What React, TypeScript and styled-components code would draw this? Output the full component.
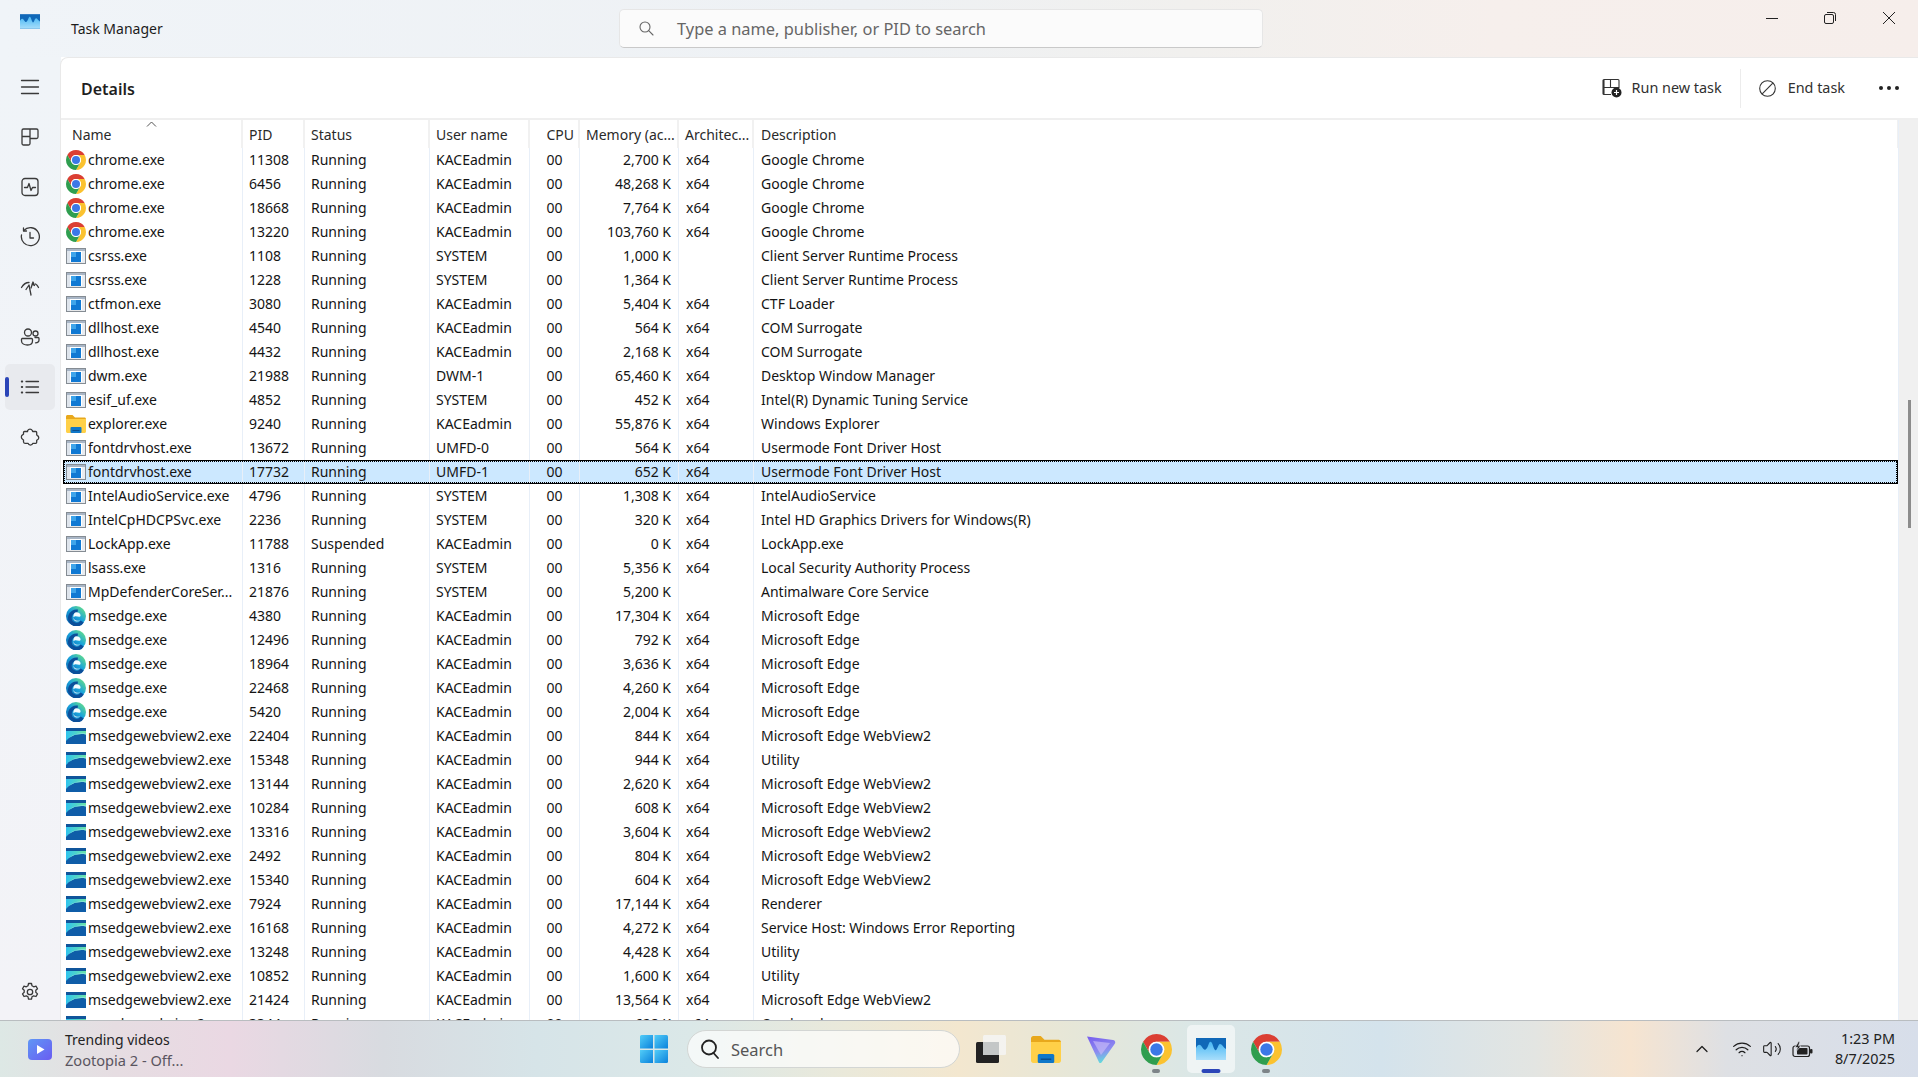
import styled, { createGlobalStyle } from "styled-components";
import { ChevronUp, Volume2, Wifi } from "lucide-react";

const GlobalStyle = createGlobalStyle`
  html, body {
    margin: 0;
    padding: 0;
    height: 100%;
    overflow: hidden;
    background: #fff;
  }
  * {
    box-sizing: border-box;
  }
  body {
    font-family: "Noto Sans", "Open Sans", "Liberation Sans", sans-serif;
    color: #1a1a1a;
  }
`;

const COLUMNS = "180px 62px 125px 100px 50px 99px 75px 1145px";

const Page = styled.div`
  width: 1918px;
  height: 1077px;
  display: flex;
  flex-direction: column;
  overflow: hidden;
`;

const TitleBar = styled.header`
  height: 57px;
  flex: none;
  display: grid;
  grid-template-columns: 619px 644px 1fr;
  align-items: center;
  background: linear-gradient(90deg, #f0f4f8 0%, #eef1f4 45%, #f1f0ee 62%, #f6efec 78%, #f6eeeb 100%);
`;

const TitleGroup = styled.div`
  display: flex;
  align-items: flex-start;
  height: 100%;
  padding: 14px 0 0 20px;
`;

const AppTitle = styled.span`
  margin: 6px 0 0 31px;
  font-size: 14px;
  line-height: 18px;
  color: #1c1c1c;
`;

const SearchBox = styled.div`
  height: 39px;
  margin-top: -1px;
  display: flex;
  align-items: center;
  padding-left: 19px;
  background: #fbfbfb;
  border: 1px solid #e6e6e6;
  border-bottom-color: #c9c9c9;
  border-radius: 5px;
  font-size: 16.4px;
  color: #666;
  span {
    margin-left: 23px;
  }
`;

const WindowControls = styled.div`
  display: flex;
  justify-content: flex-end;
  align-self: start;
`;

const ControlButton = styled.div`
  width: 58.5px;
  height: 36px;
  display: flex;
  align-items: center;
  justify-content: center;
`;

const Body = styled.div`
  flex: 1;
  min-height: 0;
  display: flex;
`;

const Rail = styled.nav`
  width: 61px;
  flex: none;
  display: flex;
  flex-direction: column;
  padding: 7px 0 0 5px;
  background: linear-gradient(180deg, #f0f4f8, #f3f3f7);
`;

const RailItem = styled.div<{ $active?: boolean }>`
  position: relative;
  width: 50px;
  height: 46px;
  margin-bottom: 4px;
  display: flex;
  align-items: center;
  justify-content: center;
  border-radius: 5px;
  background: ${(props) => (props.$active ? "#e8eaee" : "transparent")};
  color: #3a3a3a;
  &::before {
    content: "";
    display: ${(props) => (props.$active ? "block" : "none")};
    position: absolute;
    left: 0;
    top: 13px;
    width: 4px;
    height: 20px;
    border-radius: 2px;
    background: #2b45b8;
  }
`;

const RailSpacer = styled.div`
  flex: 1;
`;

const RailFooter = styled(RailItem)`
  margin-bottom: 5px;
`;

const Panel = styled.main`
  flex: 1;
  min-width: 0;
  display: flex;
  flex-direction: column;
  background: #fff;
  border-top-left-radius: 8px;
  border-top: 1px solid #e9e9e9;
  border-left: 1px solid #e9e9e9;
  margin-left: -1px;
  overflow: hidden;
`;

const PanelHeader = styled.div`
  height: 62px;
  flex: none;
  display: flex;
  align-items: center;
  padding: 0 19px 0 20px;
  border-bottom: 2px solid #efefef;
`;

const PanelTitle = styled.h1`
  flex: 1;
  margin: 2px 0 0;
  font-size: 16px;
  font-weight: 600;
  color: #1f1f1f;
`;

const ActionButton = styled.div<{ $gap: number }>`
  display: flex;
  align-items: center;
  gap: ${(props) => props.$gap}px;
  font-size: 14.4px;
  line-height: 18px;
  color: #303030;
`;

const ActionDivider = styled.div`
  width: 1px;
  height: 39px;
  margin: 0 18px;
  background: #ececec;
`;

const MoreDots = styled.div`
  display: flex;
  gap: 4px;
  margin-left: 34px;
  i {
    width: 4px;
    height: 4px;
    border-radius: 50%;
    background: #222;
  }
`;

const TableArea = styled.div`
  flex: 1;
  min-height: 0;
  display: flex;
  overflow: hidden;
`;

const Table = styled.div`
  flex: 1;
  min-width: 0;
  padding-left: 2px;
  border-right: 1px solid #e8eff8;
  overflow: hidden;
`;

const ScrollTrack = styled.div`
  width: 19px;
  flex: none;
  padding: 280px 7px 0 9px;
  background: #f0f0f0;
`;

const ScrollThumb = styled.div`
  height: 128px;
  background: #8c8c8c;
`;

const HeaderRow = styled.div`
  position: relative;
  display: grid;
  grid-template-columns: ${COLUMNS};
  height: 28px;
  font-size: 14px;
  line-height: 29px;
  color: #2a2a2a;
`;

const HeaderCell = styled.div<{ $right?: boolean; $inset?: number }>`
  padding: 0 ${(props) => (props.$right ? 4 : 0)}px 0 ${(props) => props.$inset ?? 6}px;
  text-align: ${(props) => (props.$right ? "right" : "left")};
  border-right: 2px solid #f1f1f1;
  white-space: nowrap;
  overflow: hidden;
`;

const SortCaret = styled.svg`
  position: absolute;
  left: 83px;
  top: 1px;
`;

const Row = styled.div<{ $selected?: boolean }>`
  position: relative;
  display: grid;
  grid-template-columns: ${COLUMNS};
  height: 24px;
  font-size: 14px;
  line-height: 24px;
  color: #141414;
  background: ${(props) => (props.$selected ? "#cce8ff" : "transparent")};
  &::after {
    content: "";
    display: ${(props) => (props.$selected ? "block" : "none")};
    position: absolute;
    inset: 0;
    border: 1px solid #000;
    outline: 1px dotted #000;
    outline-offset: -2px;
    pointer-events: none;
  }
`;

const Cell = styled.div<{ $align?: string; $inset?: number }>`
  padding: 0 ${(props) => (props.$align === "right" ? 7 : 0)}px 0 ${(props) => props.$inset ?? 6}px;
  text-align: ${(props) => props.$align ?? "left"};
  border-right: 1px solid #e8eff8;
  white-space: nowrap;
  overflow: hidden;
`;

const NameCell = styled(Cell)`
  display: flex;
  align-items: center;
  gap: 2px;
  padding-left: 3px;
`;

const Taskbar = styled.footer`
  height: 57px;
  flex: none;
  display: grid;
  grid-template-columns: 630px 644px 1fr;
  align-items: center;
  border-top: 1px solid #b9bdc0;
  background: linear-gradient(
    90deg,
    #dde8e5 0%,
    #e6dde2 6%,
    #ead8e3 12%,
    #d8dbe0 20%,
    #d6e4e8 28%,
    #dbe8e8 36%,
    #eae9da 44%,
    #f3e7cf 50%,
    #e6e7d8 56%,
    #dbe7e6 62%,
    #d4e3ec 72%,
    #e3e5e2 80%,
    #f6e4d0 85%,
    #dee0e4 90%,
    #d7deea 100%
  );
`;

const Widget = styled.div`
  display: flex;
  align-items: center;
  gap: 13px;
  padding-left: 28px;
`;

const WidgetText = styled.div`
  padding-top: 1px;
  font-size: 14px;
  line-height: 20px;
  color: #222;
  small {
    display: block;
    font-size: 14.6px;
    color: #5a5560;
  }
`;

const Center = styled.div`
  display: flex;
  align-items: center;
  gap: 7px;
`;

const Tile = styled.div<{ $active?: boolean }>`
  position: relative;
  width: 48px;
  height: 48px;
  flex: none;
  display: flex;
  align-items: center;
  justify-content: center;
  border-radius: 5px;
  background: ${(props) => (props.$active ? "rgba(255,255,255,0.55)" : "transparent")};
`;

const RunDot = styled.span<{ $active?: boolean }>`
  position: absolute;
  bottom: 0;
  left: 50%;
  transform: translateX(-50%);
  width: ${(props) => (props.$active ? 19 : 8)}px;
  height: 4px;
  border-radius: 2px;
  background: ${(props) => (props.$active ? "#2b45b8" : "#7d8488")};
`;

const TaskSearch = styled.div`
  width: 273px;
  height: 38px;
  flex: none;
  margin-left: 2px;
  display: flex;
  align-items: center;
  gap: 12px;
  padding-left: 13px;
  border: 1px solid #d3d6d4;
  border-radius: 19px;
  background: rgba(255, 255, 255, 0.68);
  font-size: 16.5px;
  color: #555;
`;

const Tray = styled.div`
  display: flex;
  align-items: center;
  justify-content: flex-end;
  padding-right: 23px;
  color: #1f1f1f;
`;

const TrayIcons = styled.div`
  display: flex;
  align-items: center;
  gap: 10px;
  margin-right: 22px;
`;

const TrayChevron = styled(ChevronUp)`
  margin-right: 20px;
`;

const Clock = styled.div`
  font-size: 14.4px;
  line-height: 20px;
  text-align: right;
  color: #222;
`;

function ChromeIcon({ size = 20 }: { size?: number }) {
  return (
    <svg width={size} height={size} viewBox="2 2 44 44" style={{ flex: "none" }}>
      <path fill="#db3f33" d="M4.95 13A22 22 0 0 1 43.05 13H24A11 11 0 0 0 14.47 29.5Z" />
      <path fill="#fbc22f" d="M43.05 13A22 22 0 0 1 24 46L33.53 29.5A11 11 0 0 0 24 13Z" />
      <path fill="#2f9e4f" d="M24 46A22 22 0 0 1 4.95 13L14.47 29.5A11 11 0 0 0 33.53 29.5Z" />
      <circle cx="24" cy="24" r="11" fill="#fff" />
      <circle cx="24" cy="24" r="8.8" fill="#3b78e7" />
    </svg>
  );
}

function ExeIcon() {
  return (
    <svg width="20" height="16" viewBox="0 0 20 16" style={{ flex: "none" }}>
      <rect x="0.6" y="0.6" width="18.8" height="14.8" fill="#fff" stroke="#858c93" strokeWidth="1.2" />
      <rect x="1" y="1" width="18" height="2" fill="#a9b6c6" />
      <rect x="1" y="3" width="3" height="12" fill="#dfe5ec" />
      <rect x="16" y="3" width="3" height="12" fill="#e8ecf1" />
      <rect x="5" y="4" width="10" height="10" fill="#1079d3" />
      <rect x="5" y="4" width="5" height="5" fill="#3fa5ea" />
    </svg>
  );
}

function FolderIcon({ width = 20, height = 18 }: { width?: number; height?: number }) {
  return (
    <svg width={width} height={height} viewBox="0 0 20 18" style={{ flex: "none" }}>
      <path fill="#e8a81c" d="M0 1.5C0 .7.7 0 1.5 0h5L9 2.5h9.5c.8 0 1.5.7 1.5 1.5v2H0z" />
      <path fill="#ffd048" d="M0 4h20v12.5c0 .8-.7 1.5-1.5 1.5h-17C.7 18 0 17.3 0 16.5z" />
      <rect x="4.5" y="12" width="11" height="6" rx="1" fill="#0f77c9" />
      <rect x="6.5" y="15" width="7" height="1" fill="#0b4f8f" />
    </svg>
  );
}

function EdgeIcon() {
  return (
    <svg width="20" height="20" viewBox="0 0 24 24" style={{ flex: "none" }}>
      <defs>
        <linearGradient id="edgeBase" x1="0.9" y1="0.1" x2="0.2" y2="0.9">
          <stop offset="0" stopColor="#62dc8c" />
          <stop offset="0.5" stopColor="#1ba4dc" />
          <stop offset="1" stopColor="#0c6cb6" />
        </linearGradient>
      </defs>
      <circle cx="12" cy="12" r="12" fill="url(#edgeBase)" />
      <path fill="none" stroke="#0b4f9a" strokeWidth="4.5" d="M19.5 18.5A8 8 0 1 1 14 6.500" />
      <path fill="#f4fbff" d="M12.500 7.500c3 0 5 1.800 5 3.800 0 1-.8 1.500-1.800 1.500-1.500 0-3-.8-4.700-.6-1 .1-1.700.7-2.100 1.500C8.500 10 10 7.500 12.500 7.500z" />
      <path fill="#cfeaf8" d="M9 14c.5 2 2.500 3.600 5.500 3.700 1 0 2-.2 2.800-.6-1.500 1.200-3.300 1.600-5 1.400C9.800 18 8.500 16 9 14z" />
    </svg>
  );
}

function WebviewIcon() {
  return (
    <svg width="20" height="16" viewBox="0 0 20 16" style={{ flex: "none" }}>
      <defs>
        <linearGradient id="webviewSky" x1="0" y1="0.5" x2="1" y2="0.5">
          <stop offset="0" stopColor="#2fc3ee" />
          <stop offset="1" stopColor="#6be3a7" />
        </linearGradient>
      </defs>
      <rect width="20" height="3" fill="#10559b" />
      <rect y="3" width="20" height="13" fill="url(#webviewSky)" />
      <path fill="#0f5da8" d="M0 16V13C4 8 11 5 20 6.500V16z" />
      <path fill="#8fe6e0" d="M0 13C4 7.500 11 4.500 20 5.500V6.500C11 5 4 8 0 13z" />
    </svg>
  );
}

function TaskManagerLogo({ width = 20, height = 15 }: { width?: number; height?: number }) {
  return (
    <svg width={width} height={height} viewBox="0 0 30 22" style={{ flex: "none" }}>
      <defs>
        <linearGradient id="tmFill" x1="0.5" y1="0" x2="0.5" y2="1">
          <stop offset="0" stopColor="#49b8f4" />
          <stop offset="1" stopColor="#a8defb" />
        </linearGradient>
      </defs>
      <rect width="30" height="22" fill="#1068b8" />
      <path
        fill="url(#tmFill)"
        d="M0 10C2 6 4 6 6 9s3 4 5 1 2-7 4-6 2 6 4 8 3-6 5-6 3 3 6 5v11H0z"
      />
    </svg>
  );
}

function ProcessStatusIcon({ kind }: { kind: string }) {
  if (kind === "chrome") return <ChromeIcon />;
  if (kind === "explorer") return <FolderIcon />;
  if (kind === "edge") return <EdgeIcon />;
  if (kind === "webview") return <WebviewIcon />;
  return <ExeIcon />;
}

const railStroke = { fill: "none", stroke: "#3a3a3a", strokeWidth: 1.3, strokeLinecap: "round", strokeLinejoin: "round" } as const;

function RailIcon({ children }: { children: React.ReactNode }) {
  return (
    <svg width="20" height="20" viewBox="0 0 20 20" {...railStroke}>
      {children}
    </svg>
  );
}

function WinLogo() {
  return (
    <svg width="30" height="30" viewBox="0 0 30 30">
      <defs>
        <linearGradient id="winPane" x1="0" y1="0" x2="1" y2="1">
          <stop offset="0" stopColor="#52cdf8" />
          <stop offset="1" stopColor="#0b82dc" />
        </linearGradient>
      </defs>
      <path fill="url(#winPane)" d="M1 2.500A1.500 1.500 0 0 1 2.500 1H14v13.500H1z" />
      <path fill="url(#winPane)" d="M15.500 1H27.500A1.500 1.500 0 0 1 29 2.500V14.500H15.500z" />
      <path fill="url(#winPane)" d="M1 16H14V29H2.500A1.500 1.500 0 0 1 1 27.500z" />
      <path fill="url(#winPane)" d="M15.500 16H29V27.500A1.500 1.500 0 0 1 27.500 29H15.500z" />
    </svg>
  );
}

function TaskViewIcon() {
  return (
    <svg width="32" height="30" viewBox="0 0 32 30">
      <rect x="1" y="8" width="23" height="21" rx="1.500" fill="#222" />
      <rect x="8" y="1" width="23" height="20" rx="1.500" fill="#f5f5f5" fillOpacity="0.85" />
      <rect x="8" y="8" width="16" height="13" fill="#c4c7c7" />
    </svg>
  );
}

function VpnIcon() {
  return (
    <svg width="30" height="28" viewBox="0 0 30 28">
      <defs>
        <linearGradient id="vpnFill" x1="0.3" y1="0" x2="0.6" y2="1">
          <stop offset="0" stopColor="#7a63ee" />
          <stop offset="0.55" stopColor="#8d8cf0" />
          <stop offset="1" stopColor="#5fe3d9" />
        </linearGradient>
      </defs>
      <path fill="url(#vpnFill)" d="M1 1.500 27 5c2 .3 2.800 2.200 1.800 3.800L15.500 27.500c-.8 1-2 .8-2.500-.3z" />
      <path fill="#c9bdf7" d="M7 6 24 8 15 20z" opacity="0.65" />
    </svg>
  );
}

function BatteryIcon() {
  return (
    <svg width="21" height="17" viewBox="0 0 21 17" fill="none">
      <rect x="1" y="5" width="16.500" height="10.500" rx="2" stroke="#222" strokeWidth="1.200" />
      <rect x="5" y="7" width="10.500" height="6.500" rx="0.800" fill="#222" />
      <rect x="18" y="8" width="2.500" height="4.500" rx="1" fill="#222" />
      <path d="M6.500 0.500 3 6.500H5.500L4 10.500 9 5H6.500L8 0.500z" fill="#222" stroke="#dfe3ea" strokeWidth="0.700" />
    </svg>
  );
}

interface IProcess {
  kind: string;
  name: string;
  pid: string;
  status?: string;
  user: string;
  memory: string;
  arch?: string;
  description: string;
  selected?: boolean;
}

const ADMIN = "KACEadmin";

const chromeRows: IProcess[] = [
  ["11308", "2,700 K"],
  ["6456", "48,268 K"],
  ["18668", "7,764 K"],
  ["13220", "103,760 K"],
].map(([pid, memory]) => ({
  kind: "chrome",
  name: "chrome.exe",
  pid,
  user: ADMIN,
  memory,
  arch: "x64",
  description: "Google Chrome",
}));

const systemRows: IProcess[] = [
  { kind: "exe", name: "csrss.exe", pid: "1108", user: "SYSTEM", memory: "1,000 K", arch: "", description: "Client Server Runtime Process" },
  { kind: "exe", name: "csrss.exe", pid: "1228", user: "SYSTEM", memory: "1,364 K", arch: "", description: "Client Server Runtime Process" },
  { kind: "exe", name: "ctfmon.exe", pid: "3080", user: ADMIN, memory: "5,404 K", description: "CTF Loader" },
  { kind: "exe", name: "dllhost.exe", pid: "4540", user: ADMIN, memory: "564 K", description: "COM Surrogate" },
  { kind: "exe", name: "dllhost.exe", pid: "4432", user: ADMIN, memory: "2,168 K", description: "COM Surrogate" },
  { kind: "exe", name: "dwm.exe", pid: "21988", user: "DWM-1", memory: "65,460 K", description: "Desktop Window Manager" },
  { kind: "exe", name: "esif_uf.exe", pid: "4852", user: "SYSTEM", memory: "452 K", description: "Intel(R) Dynamic Tuning Service" },
  { kind: "explorer", name: "explorer.exe", pid: "9240", user: ADMIN, memory: "55,876 K", description: "Windows Explorer" },
  { kind: "exe", name: "fontdrvhost.exe", pid: "13672", user: "UMFD-0", memory: "564 K", description: "Usermode Font Driver Host" },
  { kind: "exe", name: "fontdrvhost.exe", pid: "17732", user: "UMFD-1", memory: "652 K", description: "Usermode Font Driver Host", selected: true },
  { kind: "exe", name: "IntelAudioService.exe", pid: "4796", user: "SYSTEM", memory: "1,308 K", description: "IntelAudioService" },
  { kind: "exe", name: "IntelCpHDCPSvc.exe", pid: "2236", user: "SYSTEM", memory: "320 K", description: "Intel HD Graphics Drivers for Windows(R)" },
  { kind: "exe", name: "LockApp.exe", pid: "11788", status: "Suspended", user: ADMIN, memory: "0 K", description: "LockApp.exe" },
  { kind: "exe", name: "lsass.exe", pid: "1316", user: "SYSTEM", memory: "5,356 K", description: "Local Security Authority Process" },
  { kind: "exe", name: "MpDefenderCoreSer...", pid: "21876", user: "SYSTEM", memory: "5,200 K", arch: "", description: "Antimalware Core Service" },
];

const edgeRows: IProcess[] = [
  ["4380", "17,304 K"],
  ["12496", "792 K"],
  ["18964", "3,636 K"],
  ["22468", "4,260 K"],
  ["5420", "2,004 K"],
].map(([pid, memory]) => ({
  kind: "edge",
  name: "msedge.exe",
  pid,
  user: ADMIN,
  memory,
  description: "Microsoft Edge",
}));

const webviewRows: IProcess[] = [
  ["22404", "844 K", "Microsoft Edge WebView2"],
  ["15348", "944 K", "Utility"],
  ["13144", "2,620 K", "Microsoft Edge WebView2"],
  ["10284", "608 K", "Microsoft Edge WebView2"],
  ["13316", "3,604 K", "Microsoft Edge WebView2"],
  ["2492", "804 K", "Microsoft Edge WebView2"],
  ["15340", "604 K", "Microsoft Edge WebView2"],
  ["7924", "17,144 K", "Renderer"],
  ["16168", "4,272 K", "Service Host: Windows Error Reporting"],
  ["13248", "4,428 K", "Utility"],
  ["10852", "1,600 K", "Utility"],
  ["21424", "13,564 K", "Microsoft Edge WebView2"],
  ["3344", "628 K", "Crashpad"],
].map(([pid, memory, description]) => ({
  kind: "webview",
  name: "msedgewebview2.exe",
  pid,
  user: ADMIN,
  memory,
  description,
}));

const processes = [...chromeRows, ...systemRows, ...edgeRows, ...webviewRows];

function App() {
  return (
    <Page>
      <GlobalStyle />
      <TitleBar>
        <TitleGroup>
          <TaskManagerLogo />
          <AppTitle>Task Manager</AppTitle>
        </TitleGroup>
        <SearchBox>
          <svg width="15" height="15" viewBox="0 0 15 15" fill="none" stroke="#666" strokeWidth="1.100">
            <circle cx="6" cy="6" r="5" />
            <path d="M9.700 9.700 14 14" strokeLinecap="round" />
          </svg>
          <span>Type a name, publisher, or PID to search</span>
        </SearchBox>
        <WindowControls>
          <ControlButton>
            <svg width="12" height="12" viewBox="0 0 12 12" stroke="#222" strokeWidth="1">
              <path d="M0 6.500h12" />
            </svg>
          </ControlButton>
          <ControlButton>
            <svg width="12" height="12" viewBox="0 0 12 12" fill="none" stroke="#222" strokeWidth="1">
              <rect x="0.500" y="2.500" width="9" height="9" rx="1.500" />
              <path d="M3 0.500h6.500a2 2 0 0 1 2 2V9" />
            </svg>
          </ControlButton>
          <ControlButton>
            <svg width="12" height="12" viewBox="0 0 12 12" stroke="#222" strokeWidth="1">
              <path d="M0 0 12 12M12 0 0 12" />
            </svg>
          </ControlButton>
        </WindowControls>
      </TitleBar>
      <Body>
        <Rail>
          <RailItem>
            <RailIcon>
              <path d="M1.500 3.500h17M1.500 10h17M1.500 16.500h17" />
            </RailIcon>
          </RailItem>
          <RailItem>
            <RailIcon>
              <path d="M2 3.500A1.500 1.500 0 0 1 3.500 2h13A1.500 1.500 0 0 1 18 3.500V10a1.500 1.500 0 0 1-1.500 1.500H10V16.500A1.500 1.500 0 0 1 8.500 18h-5A1.500 1.500 0 0 1 2 16.500zM2 9.500h8M10 2v9.500" />
            </RailIcon>
          </RailItem>
          <RailItem>
            <RailIcon>
              <rect x="2" y="1.500" width="16" height="17" rx="3" />
              <path d="M4.500 10.500h3l1.500-4 2 7 1.500-3h3" />
            </RailIcon>
          </RailItem>
          <RailItem>
            <RailIcon>
              <path d="M3.800 3.500A9 9 0 1 1 1.500 8" />
              <path d="M3.500 1v3h3" />
              <path d="M10 5.500V11h3.500" />
            </RailIcon>
          </RailItem>
          <RailItem>
            <RailIcon>
              <path d="M1.500 10.500C3.500 7 6.500 5.500 9 5.500" />
              <path d="M18.500 10.500C17.800 9 16.800 7.800 15.500 7" />
              <path d="M6 12.500 9 8l2 10" />
              <path d="M11 11l2-6 1.500 3.500L12 7" />
            </RailIcon>
          </RailItem>
          <RailItem>
            <RailIcon>
              <circle cx="8" cy="5.500" r="3.500" />
              <circle cx="15.500" cy="6.500" r="2.500" />
              <path d="M2 11.500h9.500a1 1 0 0 1 1 1V14c0 2.500-2 4-5 4s-6-1.500-6-4v-1.500a1 1 0 0 1 .5-1z" />
              <path d="M15 10.500h3a1 1 0 0 1 1 1V13c0 1.700-1.300 2.800-3.500 2.800" />
            </RailIcon>
          </RailItem>
          <RailItem $active>
            <RailIcon>
              <path d="M6 4.500h12.500M6 10h12.500M6 15.500h12.500" />
              <path d="M1.700 4.500h.6M1.700 10h.6M1.700 15.500h.6" strokeWidth="1.800" />
            </RailIcon>
          </RailItem>
          <RailItem>
            <RailIcon>
              <path d="M7.700 3.500a2.600 2.600 0 0 1 4.600 0l.4 1h3a1 1 0 0 1 1 1v2.500l.8.600a2.400 2.400 0 0 1 0 4.200l-.8.500v2a1 1 0 0 1-1 1h-2.800a2.600 2.600 0 0 1-4.900 0H5a1.500 1.500 0 0 1-1.500-1.500V13l-.7-.5a2.700 2.700 0 0 1 0-4.800l.7-.4V5.500a1 1 0 0 1 1-1h3z" />
            </RailIcon>
          </RailItem>
          <RailSpacer />
          <RailFooter>
            <RailIcon>
              <circle cx="10" cy="10" r="2.700" />
              <path d="M8.500 1.500h3l.5 2.300 1.700 1 2.300-.7 1.500 2.600-1.700 1.600v2l1.700 1.600-1.500 2.600-2.300-.7-1.700 1-.5 2.300h-3l-.5-2.300-1.700-1-2.300.7-1.500-2.600 1.700-1.600v-2L2.500 6.700 4 4.100l2.300.7 1.700-1z" />
            </RailIcon>
          </RailFooter>
        </Rail>
        <Panel>
          <PanelHeader>
            <PanelTitle>Details</PanelTitle>
            <ActionButton $gap={10}>
              <svg width="20" height="20" viewBox="0 0 20 20" fill="none" stroke="#333" strokeWidth="1.100">
                <path d="M2 1.500h14a1 1 0 0 1 1 1V10M1 2.500a1 1 0 0 1 1-1v15a1 1 0 0 1-1-1zM1 9.500h16M8.500 1.500v8M1 15.500a1 1 0 0 0 1 1h7" />
                <circle cx="14.500" cy="14.500" r="5" fill="#222" stroke="none" />
                <path d="M12 14.500h5M14.500 12v5" stroke="#fff" strokeWidth="1.200" />
              </svg>
              Run new task
            </ActionButton>
            <ActionDivider />
            <ActionButton $gap={12}>
              <svg width="17" height="17" viewBox="0 0 17 17" fill="none" stroke="#333" strokeWidth="1.100">
                <circle cx="8.500" cy="8.500" r="7.800" />
                <path d="M3.200 13.800 13.800 3.200" />
              </svg>
              End task
            </ActionButton>
            <MoreDots>
              <i />
              <i />
              <i />
            </MoreDots>
          </PanelHeader>
          <TableArea>
            <Table>
              <HeaderRow>
                <HeaderCell $inset={9}>Name</HeaderCell>
                <HeaderCell>PID</HeaderCell>
                <HeaderCell>Status</HeaderCell>
                <HeaderCell>User name</HeaderCell>
                <HeaderCell $right>CPU</HeaderCell>
                <HeaderCell>Memory (ac...</HeaderCell>
                <HeaderCell>Architec...</HeaderCell>
                <HeaderCell $inset={7}>Description</HeaderCell>
                <SortCaret width="11" height="6" viewBox="0 0 11 6" fill="none" stroke="#555">
                  <path d="M1 5.500 5.500 1 10 5.500" />
                </SortCaret>
              </HeaderRow>
              {processes.map((process) => (
                <Row key={process.pid} $selected={process.selected}>
                  <NameCell>
                    <ProcessStatusIcon kind={process.kind} />
                    {process.name}
                  </NameCell>
                  <Cell>{process.pid}</Cell>
                  <Cell>{process.status ?? "Running"}</Cell>
                  <Cell>{process.user}</Cell>
                  <Cell $align="center" $inset={0}>
                    00
                  </Cell>
                  <Cell $align="right" $inset={0}>
                    {process.memory}
                  </Cell>
                  <Cell $inset={7}>{process.arch ?? "x64"}</Cell>
                  <Cell $inset={7}>{process.description}</Cell>
                </Row>
              ))}
            </Table>
            <ScrollTrack>
              <ScrollThumb />
            </ScrollTrack>
          </TableArea>
        </Panel>
      </Body>
      <Taskbar>
        <Widget>
          <svg width="24" height="21" viewBox="0 0 24 21">
            <defs>
              <linearGradient id="widgetFill" x1="0" y1="0" x2="1" y2="1">
                <stop offset="0" stopColor="#5f97f5" />
                <stop offset="1" stopColor="#6a5cf2" />
              </linearGradient>
            </defs>
            <rect width="24" height="21" rx="4" fill="url(#widgetFill)" />
            <path d="M9 6v9l7.500-4.500z" fill="#fff" />
          </svg>
          <WidgetText>
            Trending videos
            <small>Zootopia 2 - Off...</small>
          </WidgetText>
        </Widget>
        <Center>
          <Tile>
            <WinLogo />
          </Tile>
          <TaskSearch>
            <svg width="18" height="20" viewBox="0 0 18 20" fill="none" stroke="#222" strokeWidth="1.800">
              <circle cx="8" cy="8.500" r="7" />
              <path d="M12.500 14 17 19" strokeLinecap="round" />
            </svg>
            Search
          </TaskSearch>
          <Tile>
            <TaskViewIcon />
          </Tile>
          <Tile>
            <FolderIcon width={30} height={27} />
          </Tile>
          <Tile>
            <VpnIcon />
          </Tile>
          <Tile>
            <ChromeIcon size={31} />
            <RunDot />
          </Tile>
          <Tile $active>
            <TaskManagerLogo width={30} height={22} />
            <RunDot $active />
          </Tile>
          <Tile>
            <ChromeIcon size={31} />
            <RunDot />
          </Tile>
        </Center>
        <Tray>
          <TrayChevron size={20} strokeWidth={1.500} />
          <TrayIcons>
            <Wifi size={20} strokeWidth={1.500} />
            <Volume2 size={20} strokeWidth={1.300} />
            <BatteryIcon />
          </TrayIcons>
          <Clock>
            1:23 PM
            <br />
            8/7/2025
          </Clock>
        </Tray>
      </Taskbar>
    </Page>
  );
}

export default App;
